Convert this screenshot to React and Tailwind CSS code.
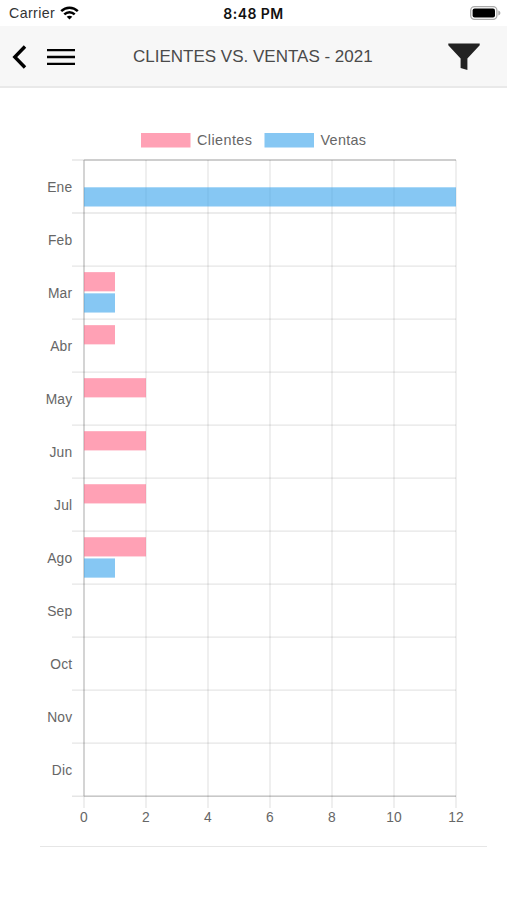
const TOP = 160;
const LEFT = 84;
const ROW = 53.02;
const UNIT = 31;

const months = [
  { label: "Ene", clientes: 0, ventas: 12 },
  { label: "Feb", clientes: 0, ventas: 0 },
  { label: "Mar", clientes: 1, ventas: 1 },
  { label: "Abr", clientes: 1, ventas: 0 },
  { label: "May", clientes: 2, ventas: 0 },
  { label: "Jun", clientes: 2, ventas: 0 },
  { label: "Jul", clientes: 2, ventas: 0 },
  { label: "Ago", clientes: 2, ventas: 1 },
  { label: "Sep", clientes: 0, ventas: 0 },
  { label: "Oct", clientes: 0, ventas: 0 },
  { label: "Nov", clientes: 0, ventas: 0 },
  { label: "Dic", clientes: 0, ventas: 0 },
];

const ticks = [0, 2, 4, 6, 8, 10, 12];
const rows = Array.from({ length: 13 }, (_, i) => i);

const StatusBar = () => (
  <div className="flex h-[26px] items-center justify-between pl-[9px] pr-[6px]">
    <div className="flex w-[100px] items-center gap-[5px]">
      <span className="text-[14.2px] leading-[26px] tracking-[0.4px] text-[#333]">Carrier</span>
      <svg width="19" height="14" viewBox="0 0 19 14" fill="none" stroke="#000" strokeWidth="2.5">
        <path d="M1.2 5.1C5.9 .5 13.1 .5 17.8 5.1" />
        <path d="M4.3 8.4C7.3 5.5 11.7 5.5 14.7 8.4" />
        <path d="M9.5 13.6 6.7 10.8C8.2 9.4 10.8 9.4 12.3 10.8Z" fill="#000" stroke="none" />
      </svg>
    </div>
    <span className="font-['Inter'] text-[14px] leading-[27px] font-semibold tracking-[0.45px] text-[#111]">8:48 PM</span>
    <div className="flex w-[103px] justify-end">
      <svg width="31" height="14" viewBox="0 0 31 14">
        <rect x=".7" y=".7" width="26.2" height="12.6" rx="3.8" fill="#fff" stroke="#aaa" strokeWidth="1.3" />
        <rect x="2.6" y="2.5" width="22.4" height="9" rx="2" fill="#000" />
        <path d="M28.3 4.6C31.1 5.5 31.1 8.5 28.3 9.4Z" fill="#aaa" />
      </svg>
    </div>
  </div>
);

const Header = () => (
  <header className="flex h-[62px] items-center border-b-2 border-[#e9e9e9] bg-[#f7f7f7] pt-px pl-3 pr-[26px]">
    <svg width="15" height="24" viewBox="0 0 15 24" fill="none" stroke="#000" strokeWidth="3.4">
      <path d="M13 1.5 2.8 12 13 22.5" />
    </svg>
    <svg className="ml-5" width="28" height="18" viewBox="0 0 28 18" stroke="#000" strokeWidth="2.3">
      <path d="M0 2.1H28M0 9H28M0 15.8H28" />
    </svg>
    <h1 className="flex-1 pl-[58px] text-[17px] whitespace-nowrap text-[#4a4a4a]">CLIENTES VS. VENTAS - 2021</h1>
    <svg width="33" height="28" viewBox="0 0 33 28" fill="#222">
      <path d="M.3 .4H31.7V2.3L19.4 15.6V26.9L12.6 25V15.6L.3 2.3Z" />
    </svg>
  </header>
);

const Chart = () => (
  <svg className="block" width="507" height="752" viewBox="0 88 507 752" fontSize="13.8" fill="#666">
    {/* Legend */}
    <rect x="141" y="133" width="49.5" height="14.5" fill="#ff6384" fillOpacity="0.6" />
    <text x="197" y="145.3" fontSize="14.4" textLength="55">Clientes</text>
    <rect x="264.5" y="133" width="49.5" height="14.5" fill="#36a2eb" fillOpacity="0.6" />
    <text x="320.5" y="145.3" fontSize="14.4" textLength="45.5">Ventas</text>

    {/* Grid */}
    <g stroke="#000" strokeOpacity="0.1" strokeWidth="1.3">
      {rows.map((i) => (
        <path key={i} d={`M72 ${TOP + i * ROW}H456`} />
      ))}
      {ticks.map((t) => (
        <path key={t} d={`M${LEFT + t * UNIT} ${TOP}V808`} />
      ))}
      <path d="M84 160H456M84 796.2H456M84 160V796" strokeOpacity="0.17" />
    </g>

    {/* Bars and month labels */}
    {months.map((m, i) => (
      <g key={m.label}>
        <rect x={LEFT} y={TOP + i * ROW + 6.1} width={m.clientes * UNIT} height="19.2" fill="#ff6384" fillOpacity="0.6" />
        <rect x={LEFT} y={TOP + i * ROW + 27.3} width={m.ventas * UNIT} height="19.2" fill="#36a2eb" fillOpacity="0.6" />
        <text x="72.3" y={TOP + i * ROW + 32} textAnchor="end" letterSpacing="0.2">{m.label}</text>
      </g>
    ))}

    {ticks.map((t) => (
      <text key={t} x={LEFT + t * UNIT} y="822.3" textAnchor="middle" letterSpacing="0.2">{t}</text>
    ))}
  </svg>
);

export default function App() {
  return (
    <div className="h-[900px] w-[507px] overflow-hidden bg-white font-['Liberation_Sans',sans-serif]">
      <StatusBar />
      <Header />
      <Chart />
      <div className="mt-[6px] ml-10 mr-5 border-t border-[#e6e6e6]" />
    </div>
  );
}
